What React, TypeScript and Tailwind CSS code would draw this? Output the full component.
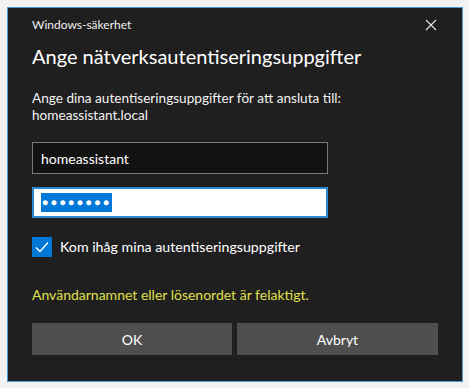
import React from 'react';

const font = { fontFamily: '"Segoe UI", Lato, "Noto Sans", sans-serif' };

const App: React.FC = () => {
  return (
    <div className="w-[469px] h-[388px] bg-[#f2f2f2] p-[7px]" style={font}>
      <div className="w-[456px] h-[375px] border border-[#4c9bd6] bg-[#1f1f1f] flex flex-col pl-[24px] pr-[23px] text-white">
        <div className="flex items-center justify-between h-[32px] pt-[1px]">
          <span className="text-[12px] leading-[16px] text-[#f0f0f0]">Windows-säkerhet</span>
          <svg width="12" height="12" viewBox="0 0 12 12" className="mr-[2px]">
            <path d="M1 1 L11 11 M11 1 L1 11" stroke="#e8e8e8" strokeWidth="1.1" />
          </svg>
        </div>
        <h1 className="text-[20px] leading-[28px] mt-[2px] text-white">Ange nätverksautentiseringsuppgifter</h1>
        <p className="text-[13.6px] leading-[17px] mt-[20px] text-[#f2f2f2]">
          Ange dina autentiseringsuppgifter för att ansluta till:
          <br />
          homeassistant.local
        </p>
        <div className="mt-[18px] w-[296px] h-[32px] border border-[#7a7a7a] bg-[#121212] flex items-center px-[8px] text-[14px]">
          homeassistant
        </div>
        <div className="mt-[13px] w-[296px] h-[31px] border-2 border-[#2b88d8] bg-white flex items-center px-[7px]">
          <span className="bg-[#0078d7] text-white text-[10px] h-[19px] tracking-[2.7px] pl-[1px] flex items-center">
            ●●●●●●●●
          </span>
        </div>
        <label className="mt-[18px] flex items-center gap-[8px] text-[14.2px]">
          <span className="w-[20px] h-[20px] bg-[#0078d7] flex items-center justify-center">
            <svg width="14" height="12" viewBox="0 0 14 12">
              <path d="M1 6.5 L5 10.5 L13 1.5" fill="none" stroke="white" strokeWidth="1.4" />
            </svg>
          </span>
          Kom ihåg mina autentiseringsuppgifter
        </label>
        <p className="mt-[29px] text-[14px] leading-[18px] text-[#e0e04c]">Användarnamnet eller lösenordet är felaktigt.</p>
        <div className="mt-[19px] flex gap-[5px]">
          <button className="w-[200px] h-[32px] bg-[#4f4f4f] text-[14px] text-white">OK</button>
          <button className="w-[201px] h-[32px] bg-[#4f4f4f] text-[14px] text-white">Avbryt</button>
        </div>
      </div>
    </div>
  );
};

export default App;
